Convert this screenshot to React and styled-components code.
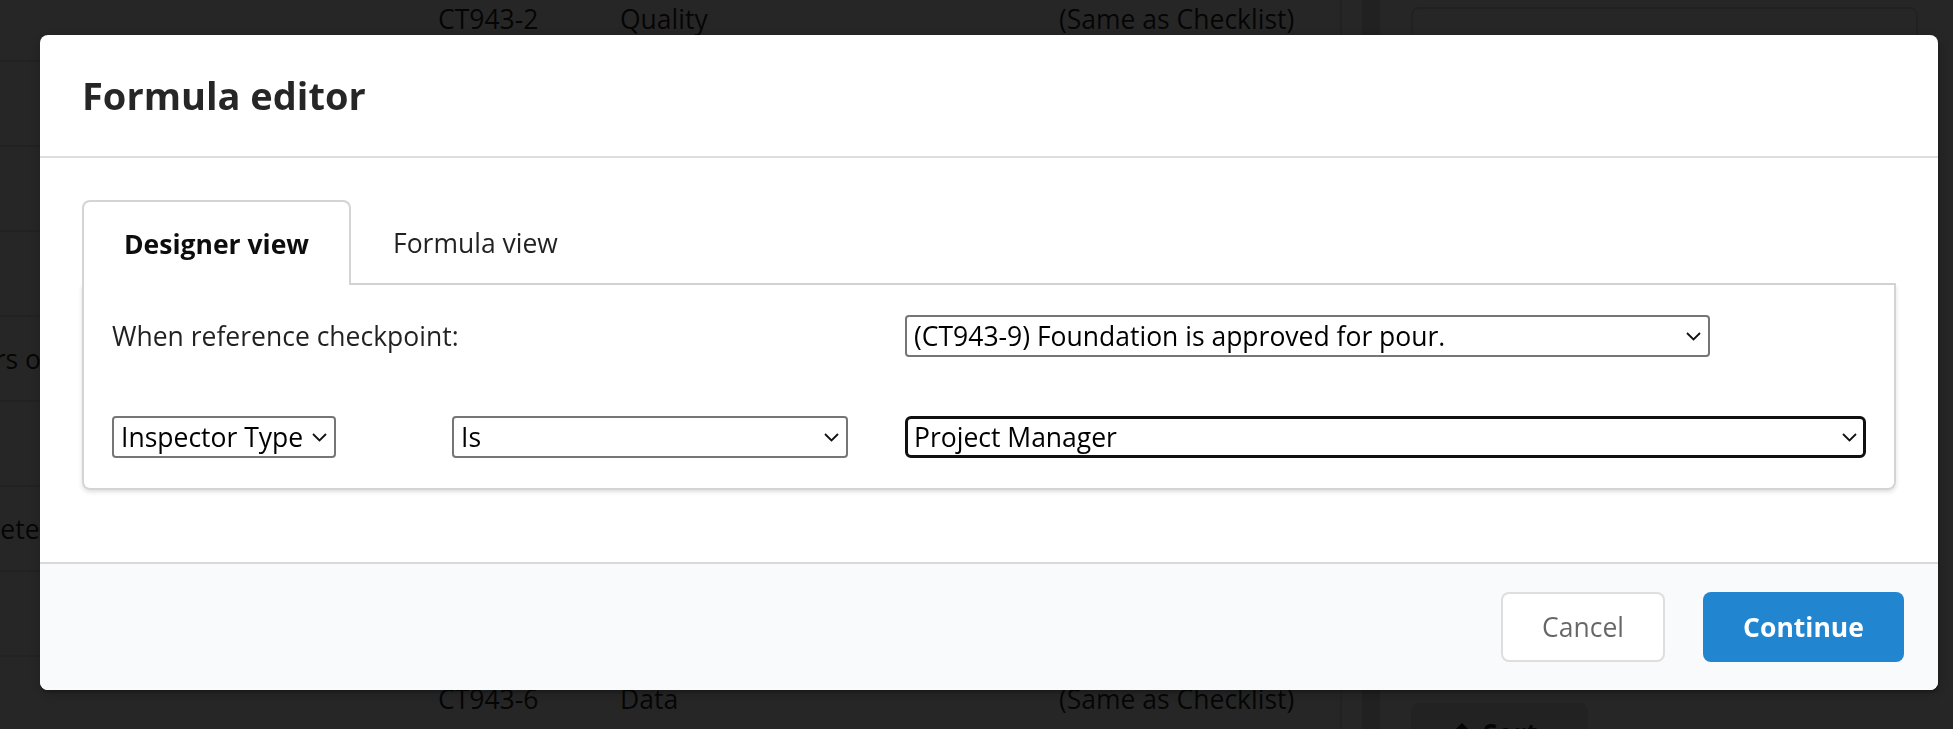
import React from "react";
import styled, { createGlobalStyle, css } from "styled-components";

const GlobalStyle = createGlobalStyle`
  html, body {
    margin: 0;
    padding: 0;
  }
  body {
    font-family: "Open Sans", "Noto Sans", "DejaVu Sans", sans-serif;
    background: #ffffff;
    overflow: hidden;
  }
  * {
    box-sizing: border-box;
  }
`;

/* ---------- page behind the dimmer ---------- */

const Page = styled.div`
  display: flex;
  width: 1953px;
  height: 729px;
  overflow: hidden;
  background: #ffffff;
  color: rgba(0, 0, 0, 0.87);
  font-size: 26.5px;
`;

const TableArea = styled.div`
  flex: none;
  width: 1342px;
  overflow: hidden;
  border-right: 2px solid rgba(34, 36, 38, 0.12);
`;

/* the table is scrolled sideways, so its first column starts off-screen */
const Rows = styled.div`
  margin: -23px 0 0 -95px;
`;

const Row = styled.div`
  display: grid;
  grid-template-columns: 533px 182px 439px 1fr;
  align-items: center;
  height: 85px;
  border-bottom: 2px solid rgba(34, 36, 38, 0.12);
  white-space: nowrap;
`;

const Cell = styled.div`
  overflow: hidden;
`;

const Gutter = styled.div`
  flex: none;
  width: 41px;
  display: flex;
  padding-left: 20px;
`;

const ScrollTrack = styled.div`
  width: 18px;
  height: 100%;
  background: #dcdcdc;
`;

const Side = styled.div`
  flex: 1;
  display: flex;
  flex-direction: column;
  justify-content: space-between;
  padding: 7px 35px 0 28px;
`;

const SideCard = styled.div`
  height: 120px;
  border: 2px solid rgba(34, 36, 38, 0.15);
  border-radius: 8px;
`;

const SortButton = styled.div`
  display: flex;
  align-items: center;
  gap: 10px;
  width: 177px;
  height: 60px;
  margin-bottom: -34px;
  padding: 0 40px;
  border-radius: 8px;
  background: #e0e1e2;
  font-weight: 700;
`;

/* ---------- dimmer and modal ---------- */

const Dimmer = styled.div`
  position: fixed;
  inset: 0;
  display: flex;
  align-items: flex-start;
  padding: 35px 15px 0 40px;
  background: rgba(0, 0, 0, 0.85);
`;

const Modal = styled.div`
  flex: 1;
  display: flex;
  flex-direction: column;
  background: #ffffff;
  border-radius: 8px;
  box-shadow: 1px 3px 3px 0 rgba(0, 0, 0, 0.2), 1px 3px 15px 2px rgba(0, 0, 0, 0.2);
  color: rgba(0, 0, 0, 0.87);
`;

const Header = styled.div`
  padding: 35px 42px;
  border-bottom: 2px solid rgba(34, 36, 38, 0.15);
  font-size: 38px;
  font-weight: 700;
  line-height: 51px;
  color: rgba(0, 0, 0, 0.85);
`;

const Content = styled.div`
  padding: 42px;
`;

const TabBar = styled.div`
  display: flex;
  height: 85px;
  border-bottom: 2px solid #d4d4d5;
`;

const Tab = styled.div`
  display: flex;
  align-items: center;
  padding: 0 40px;
  font-size: 26.5px;
  color: rgba(0, 0, 0, 0.87);
  border: 2px solid transparent;
  border-bottom: none;
  border-radius: 8px 8px 0 0;
  ${(p) =>
    p.$active &&
    css`
      height: 85px;
      margin-bottom: -2px;
      background: #ffffff;
      border-color: #d4d4d5;
      font-weight: 700;
      color: rgba(0, 0, 0, 0.95);
    `}
`;

const Panel = styled.div`
  display: grid;
  grid-template-columns: 340px 453px 1fr;
  row-gap: 59px;
  align-items: center;
  padding: 30px 28px 30px;
  margin-bottom: 30px;
  border: 2px solid #d4d4d5;
  border-top: none;
  border-radius: 0 0 8px 8px;
  box-shadow: 0 2px 4px 0 rgba(34, 36, 38, 0.15);
`;

const Label = styled.div`
  grid-column: 1 / span 2;
  font-size: 26.5px;
  color: rgba(0, 0, 0, 0.87);
`;

const SelectBox = styled.div`
  position: relative;
  height: 42px;
  width: ${(p) => p.$width || "100%"};
`;

const NativeSelect = styled.select`
  appearance: none;
  width: 100%;
  height: 100%;
  margin: 0;
  padding: 0 20px 0 7px;
  font-family: inherit;
  font-size: 26.5px;
  color: #000000;
  background: #ffffff;
  border: 2px solid #767676;
  border-radius: 4px;
  outline: none;
  ${(p) =>
    p.$focused &&
    css`
      border: 3px solid #101010;
      border-radius: 6px;
      padding-left: 6px;
    `}
`;

const Chevron = styled.svg`
  position: absolute;
  top: 50%;
  right: 9px;
  width: 15px;
  height: 9px;
  margin-top: -4px;
  pointer-events: none;
`;

const Footer = styled.div`
  display: flex;
  justify-content: flex-end;
  gap: 38px;
  padding: 28px 34px 28px 28px;
  background: #f9fafb;
  border-top: 2px solid rgba(34, 36, 38, 0.15);
  border-radius: 0 0 8px 8px;
`;

const Button = styled.button`
  height: 70px;
  width: ${(p) => p.$width};
  padding: 0;
  border: none;
  border-radius: 8px;
  font-family: inherit;
  font-size: 26.5px;
  cursor: pointer;
  ${(p) =>
    p.$primary
      ? css`
          background: #2185d0;
          color: #ffffff;
          font-weight: 700;
        `
      : css`
          background: #ffffff;
          color: rgba(0, 0, 0, 0.6);
          box-shadow: inset 0 0 0 2px rgba(34, 36, 38, 0.15);
        `}
`;

function Select({ value, width, focused }) {
  return (
    <SelectBox $width={width}>
      <NativeSelect $focused={focused} defaultValue={value}>
        <option>{value}</option>
      </NativeSelect>
      <Chevron viewBox="0 0 15 9" fill="none">
        <path d="M1 1l6.5 6.5L14 1" stroke="#111" strokeWidth="1.8" />
      </Chevron>
    </SelectBox>
  );
}

const tableRows = [
  ["Item", "CT943-2", "Quality", "(Same as Checklist)"],
  ["Forms", "CT943-3", "Quality", "(Same as Checklist)"],
  ["Rebar", "CT943-4", "Safety", "(Same as Checklist)"],
  ["Cover", "CT943-5", "Quality", "(Same as Checklist)"],
  ["Directors on site", "CT943-7", "Data", "(Same as Checklist)"],
  ["Pour", "CT943-8", "Quality", "(Same as Checklist)"],
  ["Is concrete's slump OK?", "CT943-9", "Quality", "(Same as Checklist)"],
  ["Curing", "CT943-10", "Data", "(Same as Checklist)"],
  ["Photo", "CT943-6", "Data", "(Same as Checklist)"],
  ["Sign", "CT943-11", "Data", "(Same as Checklist)"],
];

export default function App() {
  return (
    <>
      <GlobalStyle />
      <Page>
        <TableArea>
          <Rows>
            {tableRows.map((r) => (
              <Row key={r[1]}>
                {r.map((c, i) => (
                  <Cell key={i}>{c}</Cell>
                ))}
              </Row>
            ))}
          </Rows>
        </TableArea>
        <Gutter>
          <ScrollTrack />
        </Gutter>
        <Side>
          <SideCard />
          <SortButton>
            <svg width="22" height="22" viewBox="0 0 22 22" fill="none">
              <path d="M11 20V3M4 10l7-7 7 7" stroke="#222" strokeWidth="3" />
            </svg>
            Sort
          </SortButton>
        </Side>
      </Page>

      <Dimmer>
        <Modal>
          <Header>Formula editor</Header>
          <Content>
            <TabBar>
              <Tab $active>Designer view</Tab>
              <Tab>Formula view</Tab>
            </TabBar>
            <Panel>
              <Label>When reference checkpoint:</Label>
              <Select value="(CT943-9) Foundation is approved for pour." width="805px" />
              <Select value="Inspector Type" width="224px" />
              <Select value="Is" width="396px" />
              <Select value="Project Manager" focused />
            </Panel>
          </Content>
          <Footer>
            <Button $width="164px">Cancel</Button>
            <Button $primary $width="201px">
              Continue
            </Button>
          </Footer>
        </Modal>
      </Dimmer>
    </>
  );
}
